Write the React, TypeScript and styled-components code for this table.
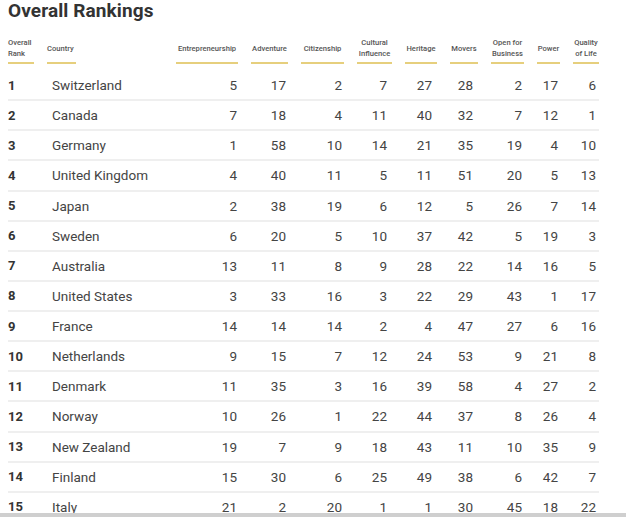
import React from "react";
import styled, { createGlobalStyle } from "styled-components";

const Global = createGlobalStyle`
  html, body { margin: 0; padding: 0; background: #fff; }
  body { font-family: Roboto, "Noto Sans", Arial, sans-serif; color: #444; overflow: hidden; }
`;

type Col = { key: string; label: string[]; width: number; pad: number; align: "left" | "center"; fit?: boolean };

const COLS: Col[] = [
  { key: "rank", label: ["Overall", "Rank"], width: 26, pad: 0, align: "left" },
  { key: "country", label: ["Country"], width: 116, pad: 0, align: "left", fit: true },
  { key: "ent", label: ["Entrepreneurship"], width: 62, pad: 1, align: "center" },
  { key: "adv", label: ["Adventure"], width: 37, pad: 2, align: "center" },
  { key: "cit", label: ["Citizenship"], width: 43, pad: 2, align: "center" },
  { key: "cul", label: ["Cultural", "Influence"], width: 35, pad: 5, align: "center" },
  { key: "her", label: ["Heritage"], width: 32, pad: 5, align: "center" },
  { key: "mov", label: ["Movers"], width: 28, pad: 5, align: "center" },
  { key: "open", label: ["Open for", "Business"], width: 33, pad: 2, align: "center" },
  { key: "pow", label: ["Power"], width: 23, pad: 2, align: "center" },
  { key: "qol", label: ["Quality", "of Life"], width: 26, pad: 3, align: "center" },
];

const ROWS: [number, string, ...number[]][] = [
  [1, "Switzerland", 5, 17, 2, 7, 27, 28, 2, 17, 6],
  [2, "Canada", 7, 18, 4, 11, 40, 32, 7, 12, 1],
  [3, "Germany", 1, 58, 10, 14, 21, 35, 19, 4, 10],
  [4, "United Kingdom", 4, 40, 11, 5, 11, 51, 20, 5, 13],
  [5, "Japan", 2, 38, 19, 6, 12, 5, 26, 7, 14],
  [6, "Sweden", 6, 20, 5, 10, 37, 42, 5, 19, 3],
  [7, "Australia", 13, 11, 8, 9, 28, 22, 14, 16, 5],
  [8, "United States", 3, 33, 16, 3, 22, 29, 43, 1, 17],
  [9, "France", 14, 14, 14, 2, 4, 47, 27, 6, 16],
  [10, "Netherlands", 9, 15, 7, 12, 24, 53, 9, 21, 8],
  [11, "Denmark", 11, 35, 3, 16, 39, 58, 4, 27, 2],
  [12, "Norway", 10, 26, 1, 22, 44, 37, 8, 26, 4],
  [13, "New Zealand", 19, 7, 9, 18, 43, 11, 10, 35, 9],
  [14, "Finland", 15, 30, 6, 25, 49, 38, 6, 42, 7],
  [15, "Italy", 21, 2, 20, 1, 1, 30, 45, 18, 22],
];

const TEMPLATE = COLS.map((c) => `${c.width}px`).join(" ");

const Page = styled.main`
  padding: 0 8px;
`;

const Title = styled.h1`
  margin: 0;
  font-size: 19px;
  line-height: 22px;
  font-weight: 700;
  color: #333;
  letter-spacing: 0.1px;
`;

const Grid = styled.div`
  display: grid;
  grid-template-columns: ${TEMPLATE};
  column-gap: 13px;
  width: 591px;
`;

const HeadRow = styled(Grid)`
  margin-top: 15px;
  margin-bottom: 7px;
`;

const HeadCell = styled.div<{ $align: "left" | "center"; $fit?: boolean }>`
  display: flex;
  flex-direction: column;
  justify-content: center;
  justify-self: ${(p) => (p.$fit ? "start" : "stretch")};
  padding-right: ${(p) => (p.$fit ? "2px" : "0")};
  height: 22px;
  font-size: 7.6px;
  line-height: 11px;
  font-weight: 500;
  color: #555;
  white-space: nowrap;
  text-align: ${(p) => p.$align};
  border-bottom: 2px solid #e6cf7d;
  padding-bottom: 3px;
`;

const Row = styled(Grid)`
  height: 28.14px;
  align-items: center;
  border-bottom: 2px solid #efefef;
  font-size: 13.5px;
`;

const Rank = styled.div`
  font-weight: 700;
  color: #333;
  font-size: 13px;
`;

const Country = styled.div`
  padding-left: 5px;
  color: #444;
  white-space: nowrap;
`;

const Num = styled.div<{ $pad: number }>`
  text-align: right;
  padding-right: ${(p) => p.$pad}px;
  color: #444;
`;

const BottomBar = styled.div`
  position: fixed;
  left: 0;
  right: 0;
  bottom: 0;
  height: 4px;
  background: #cfcfcf;
`;

export default function App() {
  return (
    <>
      <Global />
      <Page>
        <Title>Overall Rankings</Title>
        <HeadRow>
          {COLS.map((c) => (
            <HeadCell key={c.key} $align={c.align} $fit={c.fit}>
              {c.label.map((l) => (
                <span key={l}>{l}</span>
              ))}
            </HeadCell>
          ))}
        </HeadRow>
        {ROWS.map(([rank, country, ...nums]) => (
          <Row key={rank}>
            <Rank>{rank}</Rank>
            <Country>{country}</Country>
            {nums.map((n, i) => (
              <Num key={i} $pad={COLS[i + 2].pad}>
                {n}
              </Num>
            ))}
          </Row>
        ))}
      </Page>
      <BottomBar />
    </>
  );
}
